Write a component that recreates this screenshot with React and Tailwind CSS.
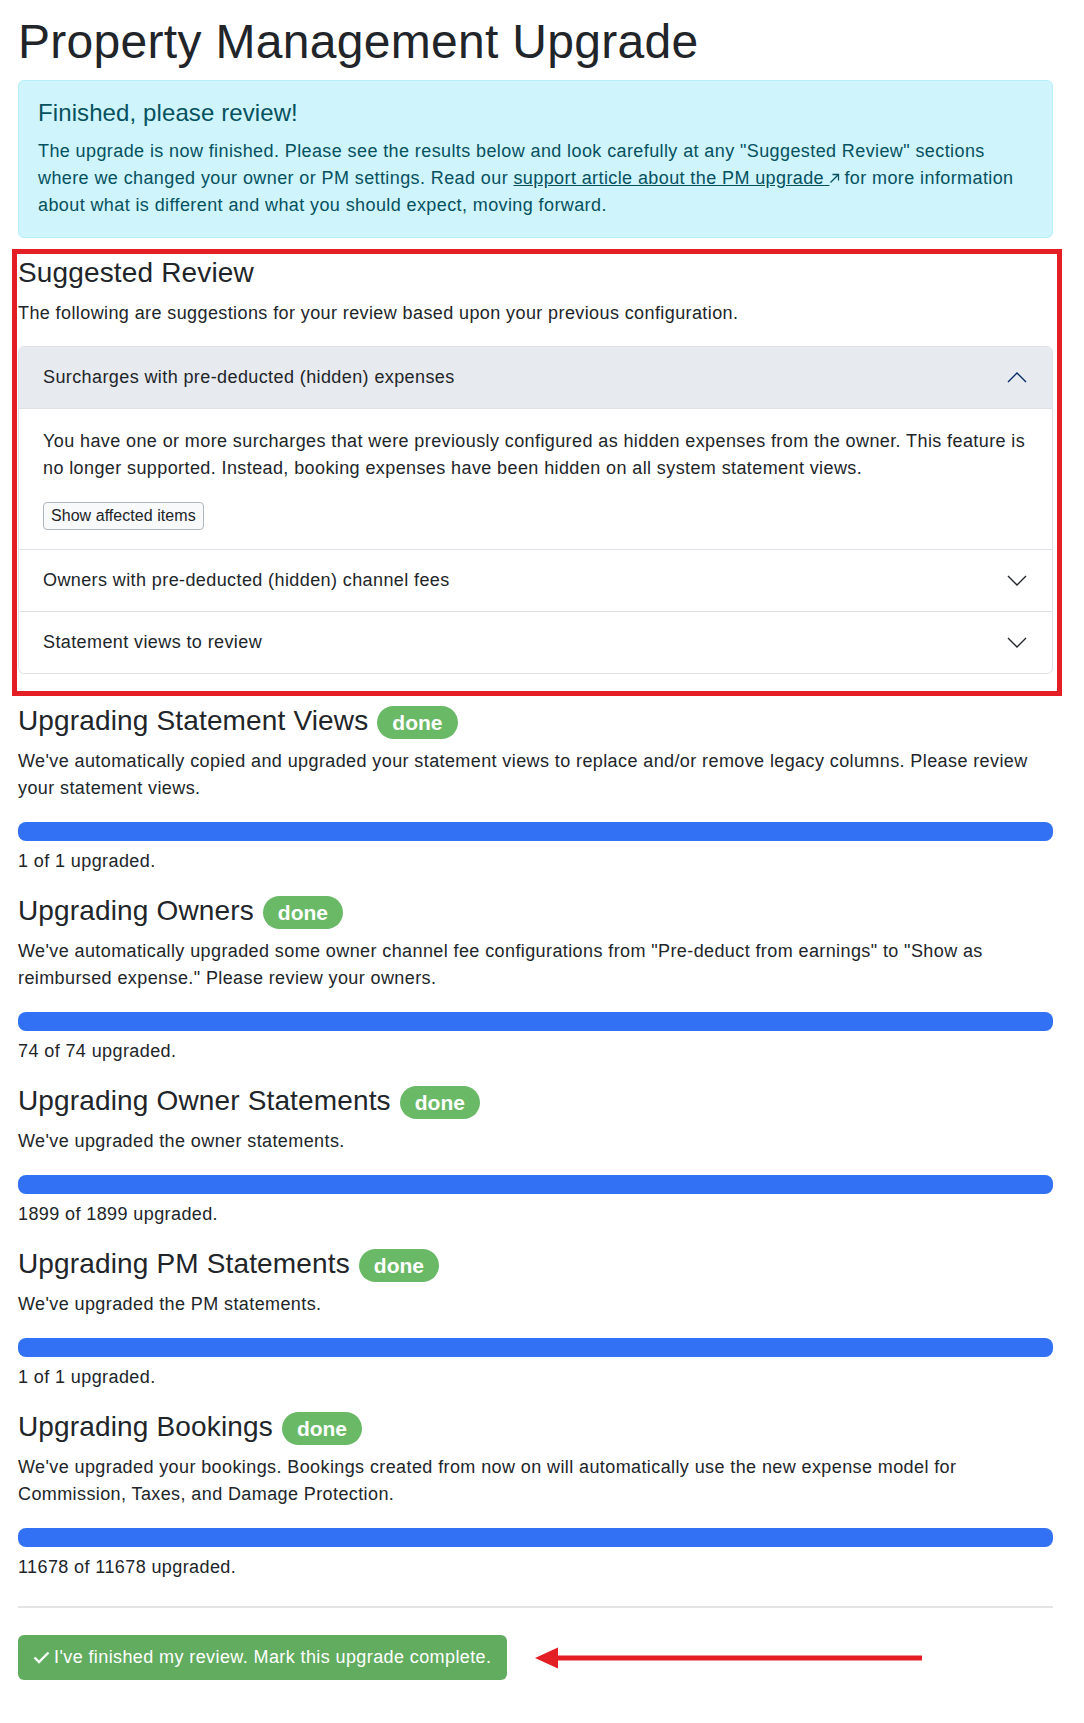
import React from "react";

const sections = [
  {
    title: "Upgrading Statement Views",
    text: "We've automatically copied and upgraded your statement views to replace and/or remove legacy columns. Please review your statement views.",
    done: 1,
    total: 1,
  },
  {
    title: "Upgrading Owners",
    text: 'We\'ve automatically upgraded some owner channel fee configurations from "Pre-deduct from earnings" to "Show as reimbursed expense." Please review your owners.',
    done: 74,
    total: 74,
  },
  {
    title: "Upgrading Owner Statements",
    text: "We've upgraded the owner statements.",
    done: 1899,
    total: 1899,
  },
  {
    title: "Upgrading PM Statements",
    text: "We've upgraded the PM statements.",
    done: 1,
    total: 1,
  },
  {
    title: "Upgrading Bookings",
    text: "We've upgraded your bookings. Bookings created from now on will automatically use the new expense model for Commission, Taxes, and Damage Protection.",
    done: 11678,
    total: 11678,
  },
];

function Chevron({ up }) {
  return (
    <svg width="20" height="11" viewBox="0 0 20 11" fill="none">
      <polyline
        points={up ? "1,10 10,1 19,10" : "1,1 10,10 19,1"}
        stroke={up ? "#052c65" : "#212529"}
        strokeWidth="1.4"
      />
    </svg>
  );
}

function AccordionHeader({ title, open, first }) {
  return (
    <div
      className={`flex h-[62px] items-center justify-between pl-[24px] pr-[25px] text-[18px] ${
        open ? "border-b border-[#dee2e6] bg-[#e7eaee]" : ""
      } ${first ? "" : "border-t border-[#dee2e6]"}`}
    >
      <span>{title}</span>
      <Chevron up={open} />
    </div>
  );
}

function UpgradeSection({ title, text, done, total }) {
  return (
    <div>
      <div className="mb-[9px] flex items-baseline gap-[9px]">
        <h4 className="text-[28px] leading-[34px] tracking-[0.15px]">{title}</h4>
        <span className="inline-block h-[33px] rounded-full bg-[#69b966] px-[15px] text-[21px] font-bold leading-[33px] tracking-normal text-white">
          done
        </span>
      </div>
      <p className="mb-5 text-[18px] leading-[27px]">{text}</p>
      <div className="h-[19px] overflow-hidden rounded-lg bg-[#e9ecef]">
        <div
          className="h-full bg-[#3371f4]"
          style={{ width: `${(done / total) * 100}%` }}
        />
      </div>
      <p className="mb-[19px] mt-[7px] text-[18px] leading-[27px]">
        {done} of {total} upgraded.
      </p>
    </div>
  );
}

export default function App() {
  return (
    <div className="min-h-[1723px] bg-white pb-[44px] pl-[18px] pr-[31px] pt-[13px] font-['Liberation_Sans',Arial,sans-serif] tracking-[0.4px] text-[#212529]">
      <h1 className="mb-[9px] text-[48px] leading-[58px] tracking-[0.3px]">
        Property Management Upgrade
      </h1>

      <div className="mb-[18px] rounded-[6px] border border-[#b6effb] bg-[#cff4fc] pb-[18px] pl-[19px] pr-[20px] pt-[17px] text-[#055160]">
        <h4 className="mb-[11px] text-[24px] leading-[29px] tracking-[0.1px]">
          Finished, please review!
        </h4>
        <p className="text-[18px] leading-[27px]">
          The upgrade is now finished. Please see the results below and look
          carefully at any "Suggested Review" sections where we changed your
          owner or PM settings. Read our{" "}
          <a href="#" className="text-[#055160] underline">
            support article about the PM upgrade{" "}
          </a>
          <svg
            className="mb-[2px] mr-[4px] inline-block"
            width="11"
            height="11"
            viewBox="0 0 11 11"
            fill="none"
          >
            <path d="M1.5 9.5 L9.5 1.5 M3.5 1.5 H9.5 V7.5" stroke="#055160" strokeWidth="1.3" />
          </svg>
          for more information about what is different and what you should
          expect, moving forward.
        </p>
      </div>

      <div className="relative mb-[30px]">
        <div className="pointer-events-none absolute -bottom-[22px] -left-[6px] -right-[9px] -top-[7px] border-[5px] border-[#e31e24]" />
        <h4 className="mb-[10px] text-[28px] leading-[34px] tracking-[0.15px]">
          Suggested Review
        </h4>
        <p className="mb-[19px] text-[18px] leading-[27px]">
          The following are suggestions for your review based upon your
          previous configuration.
        </p>
        <div className="overflow-hidden rounded-[6px] border border-[#dee2e6]">
          <AccordionHeader
            title="Surcharges with pre-deducted (hidden) expenses"
            open
            first
          />
          <div className="pb-[19px] pl-[24px] pr-[14px] pt-[19px]">
            <p className="mb-5 text-[18px] leading-[27px]">
              You have one or more surcharges that were previously configured
              as hidden expenses from the owner. This feature is no longer
              supported. Instead, booking expenses have been hidden on all
              system statement views.
            </p>
            <button className="h-[28px] rounded-[4px] border border-[#adb5bd] bg-[#f8f9fa] px-[7px] text-[16px] leading-[26px] tracking-[0.05px] text-[#212529]">
              Show affected items
            </button>
          </div>
          <AccordionHeader title="Owners with pre-deducted (hidden) channel fees" />
          <AccordionHeader title="Statement views to review" />
        </div>
      </div>

      {sections.map((s) => (
        <UpgradeSection key={s.title} {...s} />
      ))}

      <hr className="mt-[25px] border-t-2 border-[#e3e4e6]" />

      <div className="mt-[27px] flex items-center">
        <button className="flex h-[45px] items-center gap-[4px] rounded-[6px] bg-[#62ac5f] pl-[15px] pr-[16px] text-[18px] text-white">
          <svg width="17" height="13" viewBox="0 0 17 13" fill="none">
            <polyline
              points="1.5,6.5 6,11 15.5,1.5"
              stroke="white"
              strokeWidth="2.4"
            />
          </svg>
          I've finished my review. Mark this upgrade complete.
        </button>
        <svg
          className="ml-[28px]"
          width="387"
          height="22"
          viewBox="0 0 387 22"
        >
          <polygon points="0,11 23,0.5 23,21.5" fill="#e31e24" />
          <rect x="20" y="8.5" width="367" height="5" fill="#e31e24" />
        </svg>
      </div>
    </div>
  );
}
